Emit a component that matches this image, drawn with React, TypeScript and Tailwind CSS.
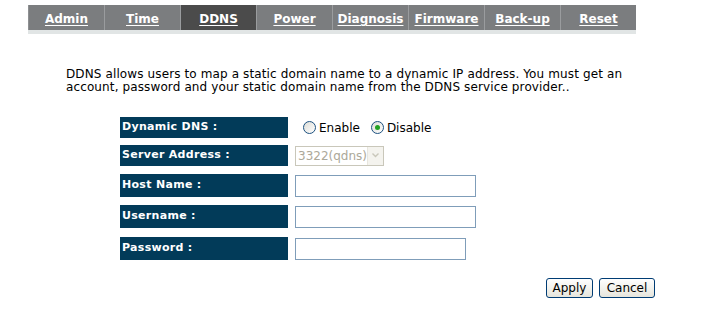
import React from 'react';

const tabs = ['Admin', 'Time', 'DDNS', 'Power', 'Diagnosis', 'Firmware', 'Back-up', 'Reset'];

const Label = ({ text, h }: { text: string; h: string }) => (
  <div className={`w-[168px] ${h} bg-[#023b59] text-white font-bold text-[11px] pl-[2px] flex items-center tracking-[0.3px]`}>
    {text}
  </div>
);

const Radio = ({ checked }: { checked?: boolean }) => (
  <span className="inline-flex w-[13px] h-[13px] rounded-full border border-[#1c5180] bg-gradient-to-br from-[#dcdcd6] to-white items-center justify-center">
    {checked && <span className="w-[5px] h-[5px] rounded-full bg-[#21a121]" />}
  </span>
);

export default function App() {
  return (
    <div className="w-[708px] h-[330px] bg-white relative" style={{ fontFamily: '"DejaVu Sans", Verdana, sans-serif' }}>
      {/* tab bar */}
      <div className="pt-[5px] pl-[28px]">
        <div className="flex w-[608px] h-[25px] bg-[#7b7d7f]">
          {tabs.map((t, i) => (
            <div
              key={t}
              className={`w-[76px] h-full flex items-center justify-center pt-[3px] text-white font-bold text-[12px] underline underline-offset-2 ${
                t === 'DDNS' ? 'bg-[#4b4b4b]' : ''
              } ${i > 0 ? 'border-l border-[#9a9c9e]' : 'border-l border-[#8e9092]'}`}
            >
              {t}
            </div>
          ))}
        </div>
        <div className="w-[608px] h-[4px] bg-[#e1e5e5]" />
      </div>

      {/* description */}
      <div className="pl-[66px] pt-[34px] text-[12px] leading-[13px] tracking-[0.12px] text-black" style={{ fontFamily: 'Tahoma, "DejaVu Sans", sans-serif' }}>
        <p>DDNS allows users to map a static domain name to a dynamic IP address. You must get an</p>
        <p>account, password and your static domain name from the DDNS service provider..</p>
      </div>

      {/* form */}
      <div className="pl-[120px] pt-[23px] flex flex-col text-[12px]">
        <div className="flex items-center h-[21px]">
          <Label text="Dynamic DNS :" h="h-[21px]" />
          <div className="ml-[15px] flex items-center gap-[3px]" style={{ fontFamily: 'Tahoma, "DejaVu Sans", sans-serif' }}>
            <Radio />
            <span className="mr-[8px]">Enable</span>
            <Radio checked />
            <span>Disable</span>
          </div>
        </div>
        <div className="flex items-center h-[21px] mt-[7px]">
          <Label text="Server Address :" h="h-[21px]" />
          <div className="ml-[7px] w-[89px] h-[20px] border border-[#c9c7ba] bg-white flex items-center justify-between pl-[2px]">
            <span className="text-[#aca899] text-[12px]" style={{ fontFamily: 'Tahoma, "DejaVu Sans", sans-serif' }}>3322(qdns)</span>
            <span className="w-[16px] h-[18px] bg-[#f4f3ee] border-l border-[#e8e6de] flex items-center justify-center">
              <svg width="7" height="5" viewBox="0 0 7 5"><path d="M0.5 0.5 L3.5 3.5 L6.5 0.5" fill="none" stroke="#c9c7ba" strokeWidth="1.4" /></svg>
            </span>
          </div>
        </div>
        <div className="flex items-center h-[23px] mt-[8px]">
          <Label text="Host Name :" h="h-[23px]" />
          <input className="ml-[7px] w-[181px] h-[22px] border border-[#7f9db9] outline-none" />
        </div>
        <div className="flex items-center h-[23px] mt-[8px]">
          <Label text="Username :" h="h-[23px]" />
          <input className="ml-[7px] w-[181px] h-[22px] border border-[#7f9db9] outline-none" />
        </div>
        <div className="flex items-center h-[23px] mt-[9px]">
          <Label text="Password :" h="h-[23px]" />
          <input type="password" className="ml-[7px] w-[171px] h-[22px] border border-[#7f9db9] outline-none" />
        </div>
      </div>

      {/* buttons */}
      <div className="flex justify-end gap-[6px] pr-[53px] mt-[18px]" style={{ fontFamily: 'Tahoma, "DejaVu Sans", sans-serif' }}>
        <button className="w-[47px] h-[20px] rounded-[3px] border border-[#003c74] bg-gradient-to-b from-white to-[#e6e5dc] text-[12px] text-black">
          Apply
        </button>
        <button className="w-[56px] h-[20px] rounded-[3px] border border-[#003c74] bg-gradient-to-b from-white to-[#e6e5dc] text-[12px] text-black">
          Cancel
        </button>
      </div>
    </div>
  );
}
